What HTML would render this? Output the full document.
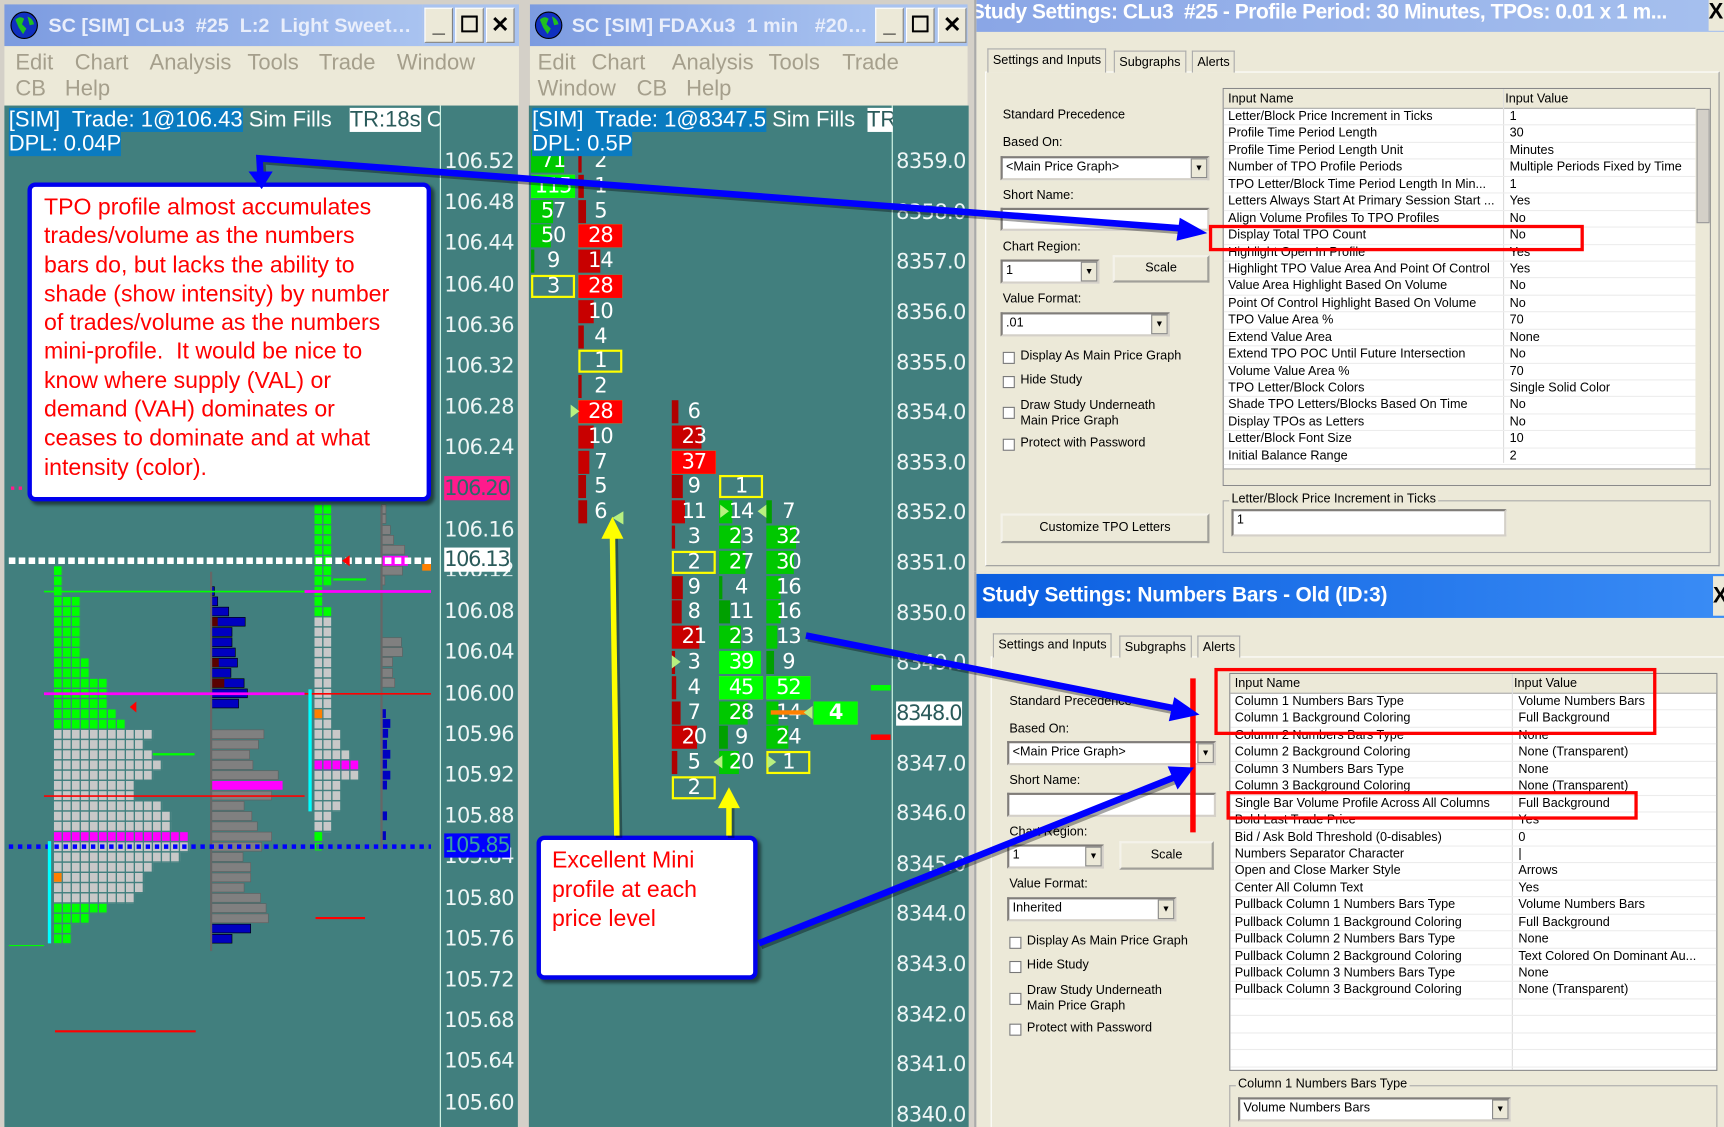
<!DOCTYPE html>
<html><head><meta charset="utf-8"><style>
*{margin:0;padding:0;box-sizing:border-box}
html,body{width:1724px;height:1127px;overflow:hidden;background:#d4d0c8}
#w{position:absolute;left:0;top:0;width:1568px;height:1025px;transform:scale(1.0995);transform-origin:0 0;font-family:"Liberation Sans",sans-serif}
.a{position:absolute}
.tb{position:absolute;height:38px;background:linear-gradient(90deg,#7c9be0,#a9c3f0);color:#e9eefb;font:bold 18px "Liberation Sans",sans-serif;white-space:nowrap;overflow:hidden;line-height:38px}
.btn{position:absolute;top:3px;width:26px;height:32px;background:#ece9d8;border:1px solid #fff;border-right-color:#808080;border-bottom-color:#808080;color:#000;font:bold 20px "Liberation Sans";text-align:center;line-height:30px}
.mn{position:absolute;background:#ece9d8;color:#a59f8c;font:20px "Liberation Sans",sans-serif}
.mn span{position:absolute}
.ch{position:absolute;background:#417f7e;overflow:hidden}
.pl{position:absolute;color:#eef6f6;font:19px "DejaVu Sans",sans-serif;letter-spacing:-0.5px;line-height:22px;white-space:nowrap}
.hl{letter-spacing:-1.2px;padding-right:1px}
.hd{position:absolute;color:#fff;font:20px "Liberation Sans",sans-serif;line-height:22px;white-space:nowrap}
.c{position:absolute;width:40px;height:21px;color:#fff;font:19px "DejaVu Sans",sans-serif;letter-spacing:-1px;text-align:center;line-height:21px}
.c i{position:absolute;left:0;top:0;height:21px}
.c span{position:relative}
.y{outline:2px solid #ffff00;outline-offset:-2px}
.dl{position:absolute;background:#ece9d8;font:11.5px "Liberation Sans",sans-serif;color:#000;overflow:hidden}
.dl .t{position:absolute;white-space:nowrap}
.cb{position:absolute;background:#fff;border:2px inset #d4d0c8;font-size:11.5px;padding-left:3px;line-height:16px}
.cb b{position:absolute;right:0;top:0;width:15px;height:100%;background:#ece9d8;border:1px solid #888;font-size:8px;text-align:center;line-height:16px;font-weight:normal}
.bt{position:absolute;background:#ece9d8;border:2px outset #f4f2ea;text-align:center}
.ck{position:absolute;width:11px;height:11px;background:#fff;border:1px solid #777}
.tab{position:absolute;border:1px solid #aaa;border-bottom:none;background:#ece9d8;padding:0 4px;line-height:20px}
.tbl{position:absolute;background:#fff;border:1px solid #888;overflow:hidden}
.r{height:15.45px;line-height:15.45px;white-space:nowrap;border-bottom:1px solid #ececec;position:relative}
.r span{position:absolute;left:4px}
.r em{position:absolute;font-style:normal}
.th{height:18px;line-height:18px;background:#ece9d8;border-bottom:1px solid #aaa;position:relative}
.th span{position:absolute}
</style></head><body><div id="w">

<div class="a" style="left:0;top:0;width:474px;height:1025px;background:#d4d0c8"></div>
<div class="tb" style="left:4px;top:4px;width:380px;padding-left:40px">SC [SIM] CLu3 &nbsp;#25 &nbsp;L:2 &nbsp;Light Sweet…</div>
<svg class="a" style="left:8px;top:9px" width="28" height="28"><circle cx="14" cy="14" r="12" fill="#1030c0" stroke="#000"/><path d="M6 9 Q10 5 14 8 L12 13 L16 17 L13 22 L9 16 Z M17 6 Q22 8 23 13 L19 14 Z" fill="#20c020"/></svg>
<div class="a" style="left:384px;top:4px;width:88px;height:38px;background:#a9c3f0"></div>
<div class="btn" style="left:386px;top:7px">_</div><div class="btn" style="left:414px;top:7px">☐</div><div class="btn" style="left:442px;top:7px">✕</div>
<div class="mn" style="left:4px;top:42px;width:468px;height:54px"><span style="left:10px;top:4px">Edit</span><span style="left:64px;top:4px">Chart</span><span style="left:132px;top:4px">Analysis</span><span style="left:221px;top:4px">Tools</span><span style="left:286px;top:4px">Trade</span><span style="left:357px;top:4px">Window</span><span style="left:10px;top:28px">CB</span><span style="left:55px;top:28px">Help</span></div>
<div class="ch" style="left:4px;top:96px;width:467px;height:929px"></div>
<div class="a" style="left:400px;top:96px;width:1px;height:929px;background:#dfe"></div>

<svg class="a" style="left:0;top:0" width="474" height="1025">
<defs>
<pattern id="g" patternUnits="userSpaceOnUse" x="49" y="143" width="8.2" height="9.3"><rect width="7" height="8" fill="#00ff00"/></pattern>
<pattern id="s" patternUnits="userSpaceOnUse" x="49" y="143" width="8.2" height="9.3"><rect width="7" height="8" fill="#c8c8c8"/></pattern>
<pattern id="m" patternUnits="userSpaceOnUse" x="49" y="143" width="8.2" height="9.3"><rect width="7" height="8" fill="#ff00ff"/></pattern>
<pattern id="g2" patternUnits="userSpaceOnUse" x="286" y="143" width="8.2" height="9.3"><rect width="7" height="8" fill="#00ff00"/></pattern>
<pattern id="s2" patternUnits="userSpaceOnUse" x="286" y="143" width="8.2" height="9.3"><rect width="7" height="8" fill="#c8c8c8"/></pattern>
<pattern id="m2" patternUnits="userSpaceOnUse" x="286" y="143" width="8.2" height="9.3"><rect width="7" height="8" fill="#ff00ff"/></pattern>
</defs>
<g>
<rect x="49" y="515" width="8.2" height="27.9" fill="url(#g)"/>
<rect x="49" y="542.9" width="24.6" height="55.8" fill="url(#g)"/>
<rect x="49" y="598.7" width="32.8" height="18.6" fill="url(#g)"/>
<rect x="49" y="617.3" width="49.2" height="27.9" fill="url(#g)"/>
<rect x="49" y="645.2" width="57.4" height="9.3" fill="url(#g)"/>
<rect x="49" y="654.5" width="65.6" height="9.3" fill="url(#g)"/>
<rect x="49" y="663.8" width="90.2" height="9.3" fill="url(#s)"/>
<rect x="49" y="673.1" width="82" height="9.3" fill="url(#s)"/>
<rect x="49" y="682.4" width="90.2" height="9.3" fill="url(#s)"/>
<rect x="49" y="691.7" width="98.4" height="9.3" fill="url(#s)"/>
<rect x="49" y="701" width="90.2" height="9.3" fill="url(#s)"/>
<rect x="49" y="710.3" width="73.8" height="18.6" fill="url(#s)"/>
<rect x="49" y="728.9" width="98.4" height="9.3" fill="url(#s)"/>
<rect x="49" y="738.2" width="106.6" height="18.6" fill="url(#s)"/>
<rect x="49" y="756.8" width="123" height="9.3" fill="url(#m)"/>
<rect x="49" y="766.1" width="123" height="9.3" fill="url(#s)"/>
<rect x="49" y="775.4" width="114.8" height="9.3" fill="url(#s)"/>
<rect x="49" y="784.7" width="90.2" height="9.3" fill="url(#s)"/>
<rect x="49" y="794" width="82" height="18.6" fill="url(#s)"/>
<rect x="49" y="812.6" width="73.8" height="9.3" fill="url(#s)"/>
<rect x="49" y="821.9" width="49.2" height="9.3" fill="url(#g)"/>
<rect x="49" y="831.2" width="32.8" height="9.3" fill="url(#g)"/>
<rect x="49" y="840.5" width="16.4" height="18.6" fill="url(#g)"/>
<rect x="49" y="794" width="7" height="8" fill="#ff8000"/>
</g>
<g>
<rect x="286" y="459" width="16.4" height="74.6" fill="url(#g2)"/>
<rect x="286" y="533.6" width="8.2" height="18.6" fill="url(#g2)"/>
<rect x="286" y="552.2" width="16.4" height="9.3" fill="url(#g2)"/>
<rect x="286" y="561.5" width="16.4" height="102.3" fill="url(#s2)"/>
<rect x="286" y="663.8" width="24.6" height="18.6" fill="url(#s2)"/>
<rect x="286" y="682.4" width="32.8" height="9.3" fill="url(#s2)"/>
<rect x="286" y="691.7" width="41" height="9.3" fill="url(#m2)"/>
<rect x="286" y="701" width="41" height="9.3" fill="url(#s2)"/>
<rect x="286" y="710.3" width="24.6" height="27.9" fill="url(#s2)"/>
<rect x="286" y="738.2" width="16.4" height="18.6" fill="url(#s2)"/>
<rect x="286" y="756.8" width="7" height="8" fill="#00ff00"/>
<rect x="287" y="767" width="5" height="6" fill="none" stroke="#00ff00"/>
<rect x="286" y="645.2" width="7" height="8" fill="#ff8000"/>
</g>
<g fill="#808080" stroke="#606060" stroke-width="0.6">
<rect x="192" y="663.8" width="48" height="8"/><rect x="192" y="673.1" width="43" height="8"/><rect x="192" y="682.4" width="35" height="8"/><rect x="192" y="691.7" width="38" height="8"/><rect x="192" y="701" width="61" height="8"/><rect x="192" y="710.3" width="65" height="8" fill="#ff00ff" stroke="none"/><rect x="192" y="719.6" width="55" height="8"/><rect x="192" y="728.9" width="30" height="8"/><rect x="192" y="738.2" width="37" height="8"/><rect x="192" y="747.5" width="42" height="8"/><rect x="192" y="756.8" width="55" height="8"/><rect x="192" y="766.1" width="46" height="8"/><rect x="192" y="775.4" width="29" height="8"/><rect x="192" y="784.7" width="36" height="8"/><rect x="192" y="794" width="36" height="8"/><rect x="192" y="803.3" width="30" height="8"/><rect x="192" y="812.6" width="45" height="8"/><rect x="192" y="821.9" width="50" height="8"/><rect x="192" y="831.2" width="52" height="8"/>
</g>
<g fill="#0000c0" stroke="#000" stroke-width="0.6">
<rect x="192" y="533.6" width="3" height="8"/><rect x="192" y="542.9" width="6" height="8"/><rect x="192" y="552.2" width="16" height="8"/><rect x="192" y="561.5" width="31" height="8"/><rect x="192" y="570.8" width="19" height="8"/><rect x="192" y="580.1" width="19" height="8"/><rect x="192" y="589.4" width="22" height="8"/><rect x="192" y="598.7" width="24" height="8"/><rect x="192" y="608" width="18" height="8"/><rect x="192" y="617.3" width="30" height="8"/><rect x="192" y="626.6" width="33" height="8"/><rect x="192" y="635.9" width="25" height="8"/><rect x="192" y="840.5" width="36" height="8"/><rect x="192" y="849.8" width="19" height="8"/>
</g>
<g fill="#5a0000"><rect x="192" y="561.5" width="6" height="8"/><rect x="192" y="598.7" width="7" height="8"/><rect x="192" y="617.3" width="12" height="8"/></g>
<rect x="191" y="520" width="2" height="345" fill="#666"/>
<g fill="#808080" stroke="#606060" stroke-width="0.6">
<rect x="347" y="459" width="4" height="8"/><rect x="347" y="468" width="4" height="8"/><rect x="347" y="478" width="8" height="8"/><rect x="347" y="487" width="11" height="8"/><rect x="347" y="496" width="21" height="8"/><rect x="347" y="515" width="19" height="8"/><rect x="347" y="524" width="3" height="8"/><rect x="347" y="580" width="18" height="8"/><rect x="347" y="589" width="19" height="8"/><rect x="347" y="598" width="10" height="8"/><rect x="347" y="608" width="10" height="8"/><rect x="347" y="617" width="12" height="8"/>
</g>
<rect x="347" y="505.5" width="24" height="9" fill="#ff00ff"/>
<g fill="#0000c0"><rect x="347" y="645" width="4" height="8"/><rect x="348" y="654" width="7" height="8"/><rect x="348" y="663" width="5" height="8"/><rect x="348" y="673" width="4" height="8"/><rect x="348" y="682" width="7" height="8"/><rect x="348" y="691" width="4" height="8"/><rect x="348" y="701" width="7" height="8"/><rect x="348" y="710" width="4" height="8"/><rect x="348" y="738" width="4" height="8"/><rect x="348" y="756" width="3" height="8"/></g>
<rect x="346" y="460" width="2" height="312" fill="#666"/>
<line x1="8" y1="510" x2="392" y2="510" stroke="#fff" stroke-width="6" stroke-dasharray="6 3"/>
<line x1="8" y1="770" x2="392" y2="770" stroke="#0000ff" stroke-width="4" stroke-dasharray="4 4.3"/>
<line x1="10" y1="444" x2="22" y2="444" stroke="#ff1a8c" stroke-width="3" stroke-dasharray="3 4"/>
<line x1="40" y1="538" x2="277" y2="538" stroke="#00ff00" stroke-width="1.5"/>
<line x1="277" y1="538" x2="392" y2="538" stroke="#ff00ff" stroke-width="2.5"/>
<line x1="40" y1="631" x2="277" y2="631" stroke="#ff00ff" stroke-width="2.5"/>
<line x1="277" y1="631" x2="392" y2="631" stroke="#ff0000" stroke-width="1.5"/>
<line x1="40" y1="724" x2="277" y2="724" stroke="#ff0000" stroke-width="1.5"/>
<line x1="139" y1="686" x2="177" y2="686" stroke="#00ff00" stroke-width="2"/>
<line x1="303" y1="527" x2="333" y2="527" stroke="#00ff00" stroke-width="2"/>
<line x1="287" y1="835" x2="332" y2="835" stroke="#ff0000" stroke-width="2"/>
<line x1="50" y1="938" x2="178" y2="938" stroke="#ff0000" stroke-width="2"/>
<line x1="8" y1="860" x2="40" y2="860" stroke="#00ff00" stroke-width="1"/>
<line x1="45" y1="765" x2="45" y2="858" stroke="#00ffff" stroke-width="3"/>
<line x1="282" y1="627" x2="282" y2="738" stroke="#00ffff" stroke-width="3"/>
<polygon points="118,643 124,638 124,648" fill="#ff0000"/>
<polygon points="311,510 318,505 318,515" fill="#ff0000"/>
<rect x="384" y="513" width="8" height="6" fill="#ff8000"/>
</svg>

<div class="pl" style="left:404px;top:136px">106.52</div><div class="pl" style="left:404px;top:173px">106.48</div><div class="pl" style="left:404px;top:210px">106.44</div><div class="pl" style="left:404px;top:248px">106.40</div><div class="pl" style="left:404px;top:285px">106.36</div><div class="pl" style="left:404px;top:322px">106.32</div><div class="pl" style="left:404px;top:359px">106.28</div><div class="pl" style="left:404px;top:396px">106.24</div>
<div class="pl hl" style="left:404px;top:433px;background:#ff1a8c;color:#2a6a6a">106.20</div>
<div class="pl" style="left:404px;top:471px">106.16</div>
<div class="pl" style="left:404px;top:508px;height:16px;overflow:hidden">106.12</div>
<div class="pl hl" style="left:404px;top:498px;background:#fff;color:#2a5a5a">106.13</div>
<div class="pl" style="left:404px;top:545px">106.08</div><div class="pl" style="left:404px;top:582px">106.04</div><div class="pl" style="left:404px;top:620px">106.00</div><div class="pl" style="left:404px;top:657px">105.96</div><div class="pl" style="left:404px;top:694px">105.92</div><div class="pl" style="left:404px;top:731px">105.88</div>
<div class="pl" style="left:404px;top:768px">105.84</div>
<div class="pl hl" style="left:404px;top:758px;background:#0000ff;color:#3aa0a0">105.85</div>
<div class="pl" style="left:404px;top:806px">105.80</div><div class="pl" style="left:404px;top:843px">105.76</div><div class="pl" style="left:404px;top:880px">105.72</div><div class="pl" style="left:404px;top:917px">105.68</div><div class="pl" style="left:404px;top:954px">105.64</div><div class="pl" style="left:404px;top:992px">105.60</div>

<div class="hd" style="left:8px;top:98px;width:392px;overflow:hidden"><span style="background:#0a7bc0">[SIM]&nbsp; Trade: 1@106.43</span> Sim Fills&nbsp;&nbsp; <span style="background:#fff;color:#2a5a5a">TR:18s</span> CLu3</div>
<div class="hd" style="left:8px;top:120px;background:#0a7bc0">DPL: 0.04P</div>

<div class="a" style="left:25px;top:166px;width:367px;height:290px;background:#fff;border:4px solid #0000ee;border-radius:7px;box-shadow:3px 3px 3px rgba(0,0,0,.5)"></div>
<div class="a" style="left:40px;top:176px;color:#ff0000;font:21px 'Liberation Sans',sans-serif;line-height:26.3px;white-space:nowrap">TPO profile almost accumulates<br>trades/volume as the numbers<br>bars do, but lacks the ability to<br>shade (show intensity) by number<br>of trades/volume as the numbers<br>mini-profile.&nbsp; It would be nice to<br>know where supply (VAL) or<br>demand (VAH) dominates or<br>ceases to dominate and at what<br>intensity (color).</div>

<div class="tb" style="left:482px;top:4px;width:312px;padding-left:38px">SC [SIM] FDAXu3 &nbsp;1 min &nbsp;&nbsp;#20…</div>
<div class="a" style="left:794px;top:4px;width:86px;height:38px;background:#a9c3f0"></div>
<svg class="a" style="left:485px;top:9px" width="28" height="28"><circle cx="14" cy="14" r="12" fill="#1030c0" stroke="#000"/><path d="M6 9 Q10 5 14 8 L12 13 L16 17 L13 22 L9 16 Z M17 6 Q22 8 23 13 L19 14 Z" fill="#20c020"/></svg>
<div class="btn" style="left:796px;top:7px">_</div><div class="btn" style="left:824px;top:7px">☐</div><div class="btn" style="left:853px;top:7px">✕</div>
<div class="mn" style="left:482px;top:42px;width:398px;height:54px"><span style="left:7px;top:4px">Edit</span><span style="left:56px;top:4px">Chart</span><span style="left:129px;top:4px">Analysis</span><span style="left:217px;top:4px">Tools</span><span style="left:284px;top:4px">Trade</span><span style="left:7px;top:28px">Window</span><span style="left:97px;top:28px">CB</span><span style="left:142px;top:28px">Help</span></div>
<div class="ch" style="left:481px;top:96px;width:400px;height:929px"></div>
<div class="a" style="left:811px;top:96px;width:1px;height:929px;background:#dfe"></div>

<div class="pl" style="left:815px;top:136px">8359.0</div><div class="pl" style="left:815px;top:182px">8358.0</div><div class="pl" style="left:815px;top:227px">8357.0</div><div class="pl" style="left:815px;top:273px">8356.0</div><div class="pl" style="left:815px;top:319px">8355.0</div><div class="pl" style="left:815px;top:364px">8354.0</div><div class="pl" style="left:815px;top:410px">8353.0</div><div class="pl" style="left:815px;top:455px">8352.0</div><div class="pl" style="left:815px;top:501px">8351.0</div><div class="pl" style="left:815px;top:547px">8350.0</div><div class="pl" style="left:815px;top:592px">8349.0</div>
<div class="pl hl" style="left:815px;top:638px;background:#fff;color:#2a5a5a">8348.0</div>
<div class="pl" style="left:815px;top:684px">8347.0</div><div class="pl" style="left:815px;top:729px">8346.0</div><div class="pl" style="left:815px;top:775px">8345.0</div><div class="pl" style="left:815px;top:820px">8344.0</div><div class="pl" style="left:815px;top:866px">8343.0</div><div class="pl" style="left:815px;top:912px">8342.0</div><div class="pl" style="left:815px;top:957px">8341.0</div><div class="pl" style="left:815px;top:1003px">8340.0</div>
<div class="a" style="left:792px;top:623px;width:18px;height:5px;background:#00ff00"></div>
<div class="a" style="left:792px;top:668px;width:18px;height:5px;background:#ff0000"></div>

<div class="c" style="left:483px;top:136px"><i style="width:30px;background:#00c800"></i><span>71</span></div>
<div class="c y" style="left:483px;top:158.8px"><i style="width:40px;background:#00ff00"></i><span>115</span></div>
<div class="c" style="left:483px;top:181.6px"><i style="width:20px;background:#00c800"></i><span>57</span></div>
<div class="c" style="left:483px;top:204.4px"><i style="width:18px;background:#00c800"></i><span>50</span></div>
<div class="c" style="left:483px;top:227.2px"><i style="width:3px;background:#00a000"></i><span>9</span></div>
<div class="c y" style="left:483px;top:250px"><span>3</span></div>
<div class="c" style="left:526px;top:136px"><i style="width:3px;background:#b00000"></i><span>2</span></div>
<div class="c" style="left:526px;top:158.8px"><i style="width:5px;background:#b00000"></i><span>1</span></div>
<div class="c" style="left:526px;top:181.6px"><i style="width:7px;background:#b00000"></i><span>5</span></div>
<div class="c y" style="left:526px;top:204.4px"><i style="width:40px;background:#ff0000"></i><span>28</span></div>
<div class="c" style="left:526px;top:227.2px"><i style="width:20px;background:#c80000"></i><span>14</span></div>
<div class="c y" style="left:526px;top:250px"><i style="width:40px;background:#ff0000"></i><span>28</span></div>
<div class="c" style="left:526px;top:272.8px"><i style="width:14px;background:#c80000"></i><span>10</span></div>
<div class="c" style="left:526px;top:295.6px"><i style="width:5px;background:#b00000"></i><span>4</span></div>
<div class="c y" style="left:526px;top:318.4px"><span>1</span></div>
<div class="c" style="left:526px;top:341.2px"><i style="width:3px;background:#b00000"></i><span>2</span></div>
<div class="c y" style="left:526px;top:364px"><i style="width:40px;background:#ff0000"></i><span>28</span></div>
<div class="c" style="left:526px;top:386.8px"><i style="width:14px;background:#c80000"></i><span>10</span></div>
<div class="c" style="left:526px;top:409.6px"><i style="width:10px;background:#c80000"></i><span>7</span></div>
<div class="c" style="left:526px;top:432.4px"><i style="width:7px;background:#b00000"></i><span>5</span></div>
<div class="c" style="left:526px;top:455.2px"><i style="width:8px;background:#b00000"></i><span>6</span></div>
<div class="c" style="left:611px;top:364px"><i style="width:6px;background:#b00000"></i><span>6</span></div>
<div class="c" style="left:611px;top:386.8px"><i style="width:27px;background:#c80000"></i><span>23</span></div>
<div class="c y" style="left:611px;top:409.6px"><i style="width:40px;background:#ff0000"></i><span>37</span></div>
<div class="c" style="left:611px;top:432.4px"><i style="width:10px;background:#b00000"></i><span>9</span></div>
<div class="c" style="left:611px;top:455.2px"><i style="width:12px;background:#c80000"></i><span>11</span></div>
<div class="c" style="left:611px;top:478px"><i style="width:3px;background:#b00000"></i><span>3</span></div>
<div class="c y" style="left:611px;top:500.8px"><span>2</span></div>
<div class="c" style="left:611px;top:523.6px"><i style="width:10px;background:#b00000"></i><span>9</span></div>
<div class="c" style="left:611px;top:546.4px"><i style="width:9px;background:#b00000"></i><span>8</span></div>
<div class="c" style="left:611px;top:569.2px"><i style="width:25px;background:#c80000"></i><span>21</span></div>
<div class="c" style="left:611px;top:592px"><i style="width:3px;background:#b00000"></i><span>3</span></div>
<div class="c" style="left:611px;top:614.8px"><i style="width:4px;background:#b00000"></i><span>4</span></div>
<div class="c" style="left:611px;top:637.6px"><i style="width:8px;background:#b00000"></i><span>7</span></div>
<div class="c" style="left:611px;top:660.4px"><i style="width:23px;background:#c80000"></i><span>20</span></div>
<div class="c" style="left:611px;top:683.2px"><i style="width:5px;background:#b00000"></i><span>5</span></div>
<div class="c y" style="left:611px;top:706px"><span>2</span></div>
<div class="c y" style="left:654px;top:432.4px"><span>1</span></div>
<div class="c" style="left:654px;top:455.2px"><i style="width:12px;background:#00c800"></i><span>14</span></div>
<div class="c" style="left:654px;top:478px"><i style="width:20px;background:#00c800"></i><span>23</span></div>
<div class="c" style="left:654px;top:500.8px"><i style="width:24px;background:#00c800"></i><span>27</span></div>
<div class="c" style="left:654px;top:523.6px"><i style="width:3px;background:#00a000"></i><span>4</span></div>
<div class="c" style="left:654px;top:546.4px"><i style="width:10px;background:#00a000"></i><span>11</span></div>
<div class="c" style="left:654px;top:569.2px"><i style="width:20px;background:#00c800"></i><span>23</span></div>
<div class="c" style="left:654px;top:592px"><i style="width:38px;background:#00ff00"></i><span>39</span></div>
<div class="c y" style="left:654px;top:614.8px"><i style="width:40px;background:#00ff00"></i><span>45</span></div>
<div class="c" style="left:654px;top:637.6px"><i style="width:26px;background:#00c800"></i><span>28</span></div>
<div class="c" style="left:654px;top:660.4px"><i style="width:8px;background:#00a000"></i><span>9</span></div>
<div class="c" style="left:654px;top:683.2px"><i style="width:18px;background:#00c800"></i><span>20</span></div>
<div class="c" style="left:697px;top:455.2px"><i style="width:5px;background:#00a000"></i><span>7</span></div>
<div class="c" style="left:697px;top:478px"><i style="width:27px;background:#00c800"></i><span>32</span></div>
<div class="c" style="left:697px;top:500.8px"><i style="width:25px;background:#00c800"></i><span>30</span></div>
<div class="c" style="left:697px;top:523.6px"><i style="width:13px;background:#00c800"></i><span>16</span></div>
<div class="c" style="left:697px;top:546.4px"><i style="width:13px;background:#00c800"></i><span>16</span></div>
<div class="c" style="left:697px;top:569.2px"><i style="width:10px;background:#00c800"></i><span>13</span></div>
<div class="c" style="left:697px;top:592px"><i style="width:7px;background:#00a000"></i><span>9</span></div>
<div class="c y" style="left:697px;top:614.8px"><i style="width:40px;background:#00ff00"></i><span>52</span></div>
<div class="c" style="left:697px;top:637.6px"><i style="width:11px;background:#00c800"></i><span>14</span></div>
<div class="c" style="left:697px;top:660.4px"><i style="width:20px;background:#00c800"></i><span>24</span></div>
<div class="c y" style="left:697px;top:683.2px"><span>1</span></div>
<div class="c y" style="left:740px;top:637.6px;font-weight:bold"><i style="width:40px;background:#00ff00"></i><span>4</span></div>
<div class="a" style="left:701px;top:646px;width:36px;height:4px;background:#ff8000"></div>
<svg class="a" style="left:480px;top:130px" width="320" height="600">
<g fill="#b8f080"><polygon points="87,335 77,341 87,347"/><polygon points="175,329 183,335 175,341"/><polygon points="217,329 209,335 217,341"/><polygon points="131,466 139,472 131,478"/><polygon points="177,557 169,563 177,569"/><polygon points="218,557 226,563 218,569"/><polygon points="39,238 47,244 39,250"/><polygon points="259,512 251,518 259,524"/></g>
</svg>

<div class="hd" style="left:484px;top:98px;width:328px;overflow:hidden"><span style="background:#0a7bc0">[SIM]&nbsp; Trade: 1@8347.5</span> Sim Fills&nbsp; <span style="background:#fff;color:#2a5a5a">TR:2</span></div>
<div class="hd" style="left:484px;top:120px;background:#0a7bc0">DPL: 0.5P</div>

<div class="a" style="left:488px;top:760px;width:201px;height:131px;background:#fff;border:4px solid #0000ee;border-radius:7px;box-shadow:3px 3px 3px rgba(0,0,0,.5)"></div>
<div class="a" style="left:502px;top:770px;color:#ff0000;font:21px 'Liberation Sans',sans-serif;line-height:26.5px;white-space:nowrap">Excellent Mini<br>profile at each<br>price level</div>

<div class="dl" style="left:886px;top:0;width:682px;height:520px;border-left:2px solid #aaa">
<div class="a" style="left:0;top:0;width:682px;height:29px;background:linear-gradient(90deg,#8aa6e6,#a6c0ee)"></div>
<div class="a" style="left:-5px;top:0;width:672px;height:29px;color:#fff;font:bold 19px 'Liberation Sans',sans-serif;line-height:24px;white-space:nowrap;overflow:hidden;letter-spacing:-0.4px">Study Settings: CLu3 &nbsp;#25 - Profile Period: 30 Minutes, TPOs: 0.01 x 1 m...</div>
<div class="a" style="left:666px;top:0;width:16px;height:28px;background:#ece9d8;font:bold 20px sans-serif">X</div>
<div class="a" style="left:8px;top:65px;width:668px;height:450px;border:1px solid #fff;border-right-color:#999;border-bottom-color:#999"></div>
<div class="tab" style="left:10px;top:44px;height:22px">Settings and Inputs</div>
<div class="tab" style="left:125px;top:46px;height:20px">Subgraphs</div>
<div class="tab" style="left:196px;top:46px;height:20px">Alerts</div>
<div class="t" style="left:24px;top:99px">Standard Precedence</div>
<div class="t" style="left:24px;top:124px">Based On:</div>
<div class="cb" style="left:22px;top:142px;width:190px;height:22px">&lt;Main Price Graph&gt;<b>▼</b></div>
<div class="t" style="left:24px;top:172px">Short Name:</div>
<div class="cb" style="left:22px;top:189px;width:190px;height:21px"></div>
<div class="t" style="left:24px;top:219px">Chart Region:</div>
<div class="cb" style="left:22px;top:236px;width:90px;height:22px">1<b>▼</b></div>
<div class="bt" style="left:124px;top:232px;width:88px;height:25px;line-height:21px">Scale</div>
<div class="t" style="left:24px;top:266px">Value Format:</div>
<div class="cb" style="left:22px;top:284px;width:154px;height:22px">.01<b>▼</b></div>
<div class="ck" style="left:24px;top:320px"></div><div class="t" style="left:40px;top:318px">Display As Main Price Graph</div>
<div class="ck" style="left:24px;top:342px"></div><div class="t" style="left:40px;top:340px">Hide Study</div>
<div class="ck" style="left:24px;top:370px"></div><div class="t" style="left:40px;top:362px;line-height:14px">Draw Study Underneath<br>Main Price Graph</div>
<div class="ck" style="left:24px;top:399px"></div><div class="t" style="left:40px;top:397px">Protect with Password</div>
<div class="bt" style="left:22px;top:467px;width:190px;height:27px;line-height:23px">Customize TPO Letters</div>
<div class="tbl" style="left:224px;top:80px;width:444px;height:362px">
<div class="th"><span style="left:4px">Input Name</span><span style="left:256px">Input Value</span></div>
<div class="a" style="left:254px;top:0;width:1px;height:340px;background:#ddd"></div>
<div class="r"><span>Letter/Block Price Increment in Ticks</span><em style="left:260px">1</em></div>
<div class="r"><span>Profile Time Period Length</span><em style="left:260px">30</em></div>
<div class="r"><span>Profile Time Period Length Unit</span><em style="left:260px">Minutes</em></div>
<div class="r"><span>Number of TPO Profile Periods</span><em style="left:260px">Multiple Periods Fixed by Time</em></div>
<div class="r"><span>TPO Letter/Block Time Period Length In Min...</span><em style="left:260px">1</em></div>
<div class="r"><span>Letters Always Start At Primary Session Start ...</span><em style="left:260px">Yes</em></div>
<div class="r"><span>Align Volume Profiles To TPO Profiles</span><em style="left:260px">No</em></div>
<div class="r"><span>Display Total TPO Count</span><em style="left:260px">No</em></div>
<div class="r"><span>Highlight Open In Profile</span><em style="left:260px">Yes</em></div>
<div class="r"><span>Highlight TPO Value Area And Point Of Control</span><em style="left:260px">Yes</em></div>
<div class="r"><span>Value Area Highlight Based On Volume</span><em style="left:260px">No</em></div>
<div class="r"><span>Point Of Control Highlight Based On Volume</span><em style="left:260px">No</em></div>
<div class="r"><span>TPO Value Area %</span><em style="left:260px">70</em></div>
<div class="r"><span>Extend Value Area</span><em style="left:260px">None</em></div>
<div class="r"><span>Extend TPO POC Until Future Intersection</span><em style="left:260px">No</em></div>
<div class="r"><span>Volume Value Area %</span><em style="left:260px">70</em></div>
<div class="r"><span>TPO Letter/Block Colors</span><em style="left:260px">Single Solid Color</em></div>
<div class="r"><span>Shade TPO Letters/Blocks Based On Time</span><em style="left:260px">No</em></div>
<div class="r"><span>Display TPOs as Letters</span><em style="left:260px">No</em></div>
<div class="r"><span>Letter/Block Font Size</span><em style="left:260px">10</em></div>
<div class="r"><span>Initial Balance Range</span><em style="left:260px">2</em></div>
<div class="a" style="left:429px;top:0;width:14px;height:345px;background:#ece9d8"><div style="position:absolute;top:18px;left:1px;width:12px;height:104px;background:#d4d0c8;border:1px solid #999"></div></div>
<div class="a" style="left:0;top:345px;width:444px;height:16px;background:#ece9d8;border-top:1px solid #aaa"></div>
</div>
<div class="a" style="left:224px;top:455px;width:444px;height:48px;border:1px solid #aaa"></div>
<div class="t" style="left:230px;top:448px;background:#ece9d8;padding:0 2px">Letter/Block Price Increment in Ticks</div>
<div class="cb" style="left:232px;top:463px;width:250px;height:25px">1</div>
</div>

<div class="dl" style="left:886px;top:520px;width:682px;height:505px;border-left:2px solid #aaa">
<div class="a" style="left:0;top:2px;width:682px;height:40px;background:linear-gradient(90deg,#0a5ee0,#3a8cf5);color:#fff;font:bold 19px 'Liberation Sans',sans-serif;line-height:40px;white-space:nowrap;letter-spacing:-0.2px">&nbsp;Study Settings: Numbers Bars - Old (ID:3)</div>
<div class="a" style="left:670px;top:4px;width:14px;height:36px;background:#ece9d8;font:bold 20px sans-serif;line-height:36px">X</div>
<div class="a" style="left:13px;top:77px;width:669px;height:430px;border:1px solid #fff;border-right-color:#999"></div>
<div class="tab" style="left:15px;top:56px;height:22px">Settings and Inputs</div>
<div class="tab" style="left:130px;top:58px;height:20px">Subgraphs</div>
<div class="tab" style="left:201px;top:58px;height:20px">Alerts</div>
<div class="t" style="left:30px;top:112px">Standard Precedence</div>
<div class="t" style="left:30px;top:137px">Based On:</div>
<div class="cb" style="left:28px;top:154px;width:190px;height:22px">&lt;Main Price Graph&gt;<b>▼</b></div>
<div class="t" style="left:30px;top:184px">Short Name:</div>
<div class="cb" style="left:28px;top:201px;width:190px;height:22px"></div>
<div class="t" style="left:30px;top:231px">Chart Region:</div>
<div class="cb" style="left:28px;top:248px;width:88px;height:22px">1<b>▼</b></div>
<div class="bt" style="left:130px;top:245px;width:86px;height:26px;line-height:22px">Scale</div>
<div class="t" style="left:30px;top:278px">Value Format:</div>
<div class="cb" style="left:28px;top:296px;width:154px;height:22px">Inherited<b>▼</b></div>
<div class="ck" style="left:30px;top:332px"></div><div class="t" style="left:46px;top:330px">Display As Main Price Graph</div>
<div class="ck" style="left:30px;top:354px"></div><div class="t" style="left:46px;top:352px">Hide Study</div>
<div class="ck" style="left:30px;top:383px"></div><div class="t" style="left:46px;top:374px;line-height:14px">Draw Study Underneath<br>Main Price Graph</div>
<div class="ck" style="left:30px;top:411px"></div><div class="t" style="left:46px;top:409px">Protect with Password</div>
<div class="tbl" style="left:230px;top:92px;width:444px;height:362px">
<div class="th"><span style="left:4px">Input Name</span><span style="left:258px">Input Value</span></div>
<div class="a" style="left:256px;top:0;width:1px;height:362px;background:#ddd"></div>
<div class="r"><span>Column 1 Numbers Bars Type</span><em style="left:262px">Volume Numbers Bars</em></div>
<div class="r"><span>Column 1 Background Coloring</span><em style="left:262px">Full Background</em></div>
<div class="r"><span>Column 2 Numbers Bars Type</span><em style="left:262px">None</em></div>
<div class="r"><span>Column 2 Background Coloring</span><em style="left:262px">None (Transparent)</em></div>
<div class="r"><span>Column 3 Numbers Bars Type</span><em style="left:262px">None</em></div>
<div class="r"><span>Column 3 Background Coloring</span><em style="left:262px">None (Transparent)</em></div>
<div class="r"><span>Single Bar Volume Profile Across All Columns</span><em style="left:262px">Full Background</em></div>
<div class="r"><span>Bold Last Trade Price</span><em style="left:262px">Yes</em></div>
<div class="r"><span>Bid / Ask Bold Threshold (0-disables)</span><em style="left:262px">0</em></div>
<div class="r"><span>Numbers Separator Character</span><em style="left:262px">|</em></div>
<div class="r"><span>Open and Close Marker Style</span><em style="left:262px">Arrows</em></div>
<div class="r"><span>Center All Column Text</span><em style="left:262px">Yes</em></div>
<div class="r"><span>Pullback Column 1 Numbers Bars Type</span><em style="left:262px">Volume Numbers Bars</em></div>
<div class="r"><span>Pullback Column 1 Background Coloring</span><em style="left:262px">Full Background</em></div>
<div class="r"><span>Pullback Column 2 Numbers Bars Type</span><em style="left:262px">None</em></div>
<div class="r"><span>Pullback Column 2 Background Coloring</span><em style="left:262px">Text Colored On Dominant Au...</em></div>
<div class="r"><span>Pullback Column 3 Numbers Bars Type</span><em style="left:262px">None</em></div>
<div class="r"><span>Pullback Column 3 Background Coloring</span><em style="left:262px">None (Transparent)</em></div>
<div class="r"></div><div class="r"></div><div class="r"></div><div class="r"></div>
</div>
<div class="a" style="left:230px;top:467px;width:444px;height:40px;border:1px solid #aaa;border-bottom:none"></div>
<div class="t" style="left:236px;top:460px;background:#ece9d8;padding:0 2px">Column 1 Numbers Bars Type</div>
<div class="cb" style="left:238px;top:478px;width:248px;height:22px">Volume Numbers Bars<b>▼</b></div>
</div>

<svg class="a" style="left:0;top:0" width="1568" height="1025">
<rect x="1101" y="206" width="338" height="21" fill="none" stroke="#ff0000" stroke-width="3"/>
<rect x="1106" y="609" width="399" height="58" fill="none" stroke="#ff0000" stroke-width="3"/>
<rect x="1117" y="721" width="371" height="23" fill="none" stroke="#ff0000" stroke-width="3"/>
<line x1="1085" y1="617" x2="1085" y2="757" stroke="#ff0000" stroke-width="5"/>
<g stroke="#000" stroke-opacity=".35" stroke-width="7" fill="none" transform="translate(2,2)">
<polyline points="237,162 236,144 1078,208"/><line x1="733" y1="578" x2="1070" y2="645"/><line x1="690" y1="858" x2="1066" y2="708"/>
</g>
<polyline points="237,162 236,144 1078,208" fill="none" stroke="#0000ff" stroke-width="6"/>
<polygon points="226,156 248,156 238,172" fill="#0000ff"/>
<polygon points="1098,212 1073,198 1070,219" fill="#0000ff"/>
<line x1="733" y1="578" x2="1072" y2="645" stroke="#0000ff" stroke-width="6"/>
<polygon points="1091,650 1068,634 1063,656" fill="#0000ff"/>
<line x1="690" y1="858" x2="1068" y2="707" stroke="#0000ff" stroke-width="6"/>
<polygon points="1086,698 1062,697 1071,718" fill="#0000ff"/>
<g stroke="#000" stroke-opacity=".35" stroke-width="6" transform="translate(2,2)"><line x1="561" y1="760" x2="557" y2="485"/><line x1="663" y1="760" x2="663" y2="730"/></g>
<line x1="561" y1="760" x2="557" y2="485" stroke="#ffff00" stroke-width="5"/>
<polygon points="557,470 547,490 567,490" fill="#ffff00"/>
<line x1="663" y1="760" x2="663" y2="730" stroke="#ffff00" stroke-width="5"/>
<polygon points="663,716 653,735 673,735" fill="#ffff00"/>
</svg>
</div></body></html>
